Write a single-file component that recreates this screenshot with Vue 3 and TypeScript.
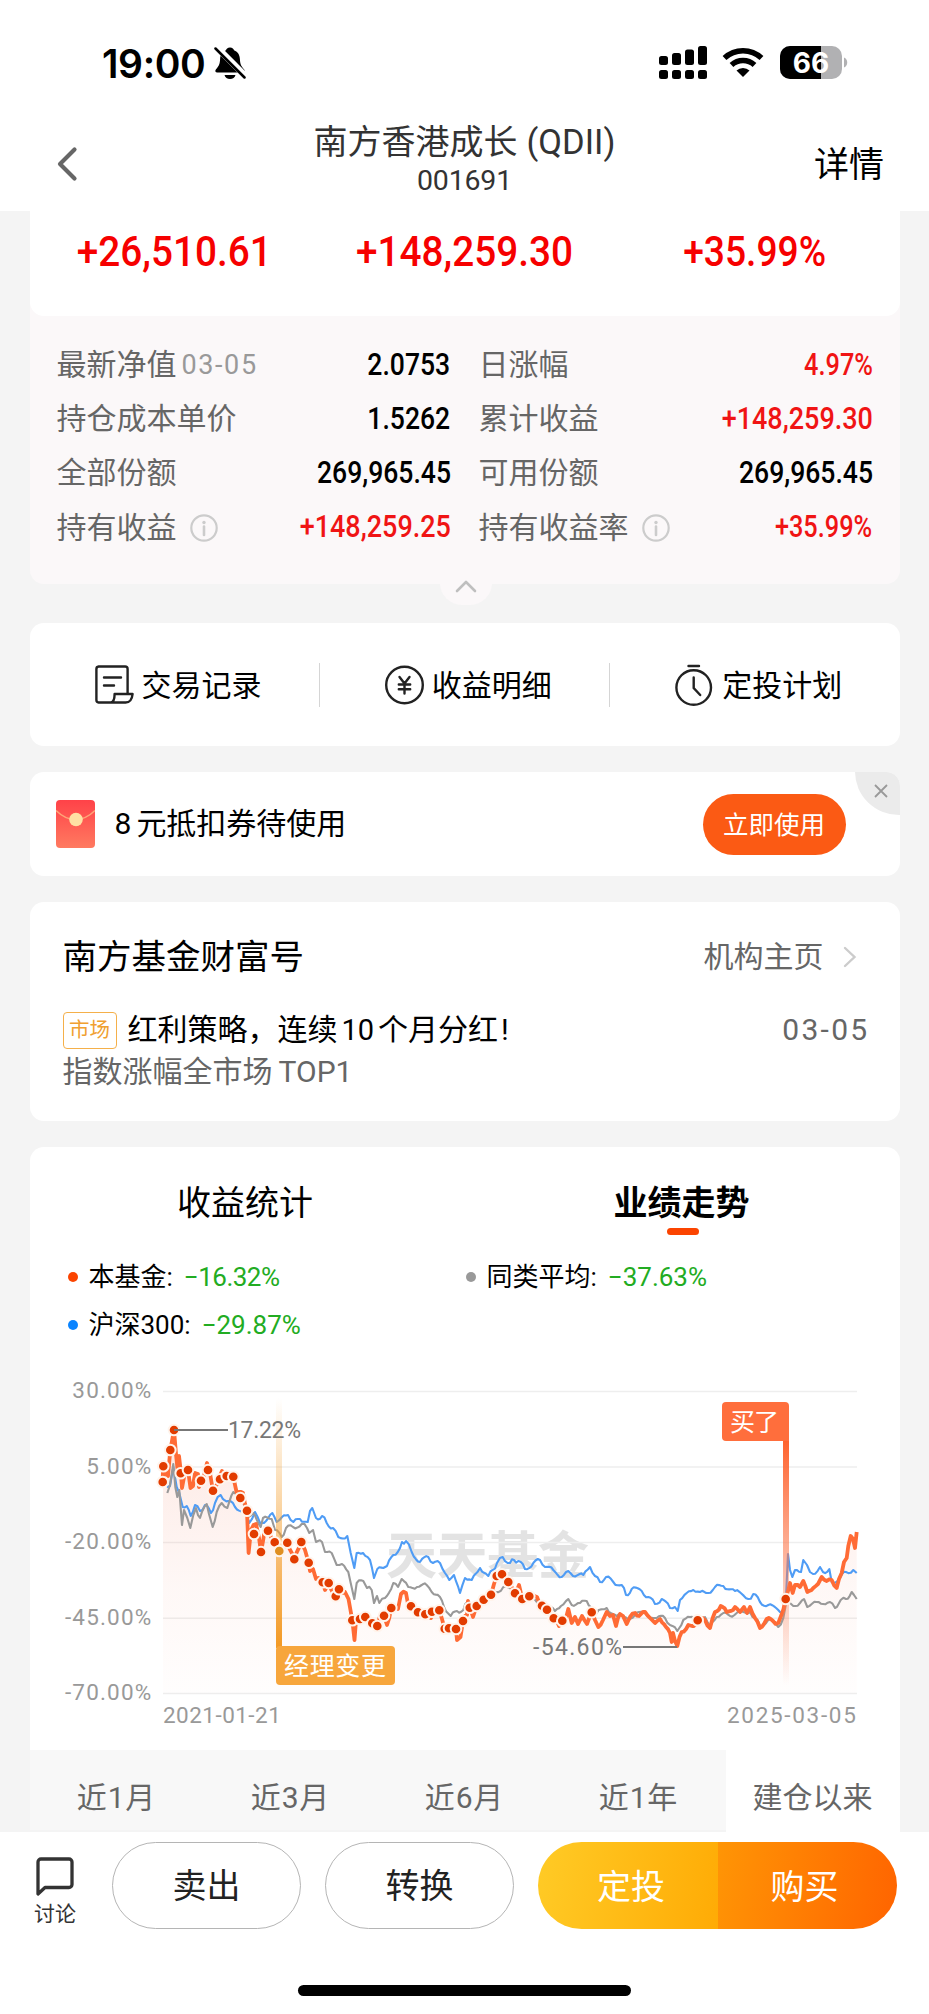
<script setup lang="ts">
type Point = [number, number]

interface Holding {
  label: string
  note?: string
  info?: boolean
  value: string
  red?: boolean
}

const totals: string[] = ['+26,510.61', '+148,259.30', '+35.99%']

const holdings: Holding[] = [
  { label: '最新净值', note: '03-05', value: '2.0753' },
  { label: '日涨幅', value: '4.97%', red: true },
  { label: '持仓成本单价', value: '1.5262' },
  { label: '累计收益', value: '+148,259.30', red: true },
  { label: '全部份额', value: '269,965.45' },
  { label: '可用份额', value: '269,965.45' },
  { label: '持有收益', info: true, value: '+148,259.25', red: true },
  { label: '持有收益率', info: true, value: '+35.99%', red: true },
]

const legend = [
  { name: '本基金:', value: '−16.32%', tone: 'fund' },
  { name: '同类平均:', value: '−37.63%', tone: 'peer' },
  { name: '沪深300:', value: '−29.87%', tone: 'index' },
]

const periods: string[] = ['近1月', '近3月', '近6月', '近1年', '建仓以来']

const grid = [
  { y: 21.5, label: '30.00%' },
  { y: 97, label: '5.00%' },
  { y: 172.5, label: '-20.00%' },
  { y: 248.3, label: '-45.00%' },
  { y: 323.5, label: '-70.00%' },
]

const fund: Point[] = [
  [133, 96], [132.7, 112], [135, 100], [138, 106], [140.3, 80], [144, 60], [146, 84], [148, 104], [149, 86], [151, 103], [152, 118],
  [155, 102], [158, 100], [160.5, 118], [163, 116], [165, 103], [168, 104], [169, 117], [171, 111], [174, 106], [177, 93], [180, 103],
  [183, 121], [188, 112], [192, 101], [196.7, 106], [203.3, 107], [207, 124], [213, 123], [217, 141], [218.6, 183], [221, 160],
  [226, 154], [229, 168], [231, 182], [235, 158], [238, 161], [244.7, 172], [249.3, 181], [257.3, 173], [264.3, 189], [271.3, 172],
  [275, 180], [278.7, 193], [280, 201], [283, 199], [286, 209], [292.7, 212], [295, 220], [298.7, 213], [305.7, 226], [309, 219],
  [315, 222], [318.5, 229], [321, 243], [322.3, 250], [324.5, 270], [326, 250], [330, 249], [335.3, 247], [342.3, 253], [347.3, 256],
  [350, 246], [354, 246], [357, 255], [361.3, 238], [368, 239], [371, 224], [376, 223], [378, 234], [381, 236], [388, 242],
  [395.3, 244], [401, 248], [402, 242], [409.3, 240], [412, 249], [414.7, 259], [419, 258], [426, 259], [427, 270], [430.5, 267],
  [433, 251], [437, 245], [438, 231], [440, 238], [443, 247], [446.7, 236], [453.7, 230], [461, 225], [464, 214], [466.7, 206],
  [472, 204], [478.3, 212], [485, 223], [489, 215], [492.3, 229], [499.3, 226], [507, 227], [512, 236], [517, 240], [523.7, 248],
  [529, 256], [532.3, 251], [536, 248], [538.3, 239], [541.7, 253], [545, 247], [548, 254], [552, 246], [557, 254], [561.7, 242],
  [565, 250], [568.3, 257], [573, 250], [576.7, 242], [580, 246], [583, 245], [586, 256], [590, 244], [593, 246], [596.7, 254],
  [600, 247], [605, 243], [609, 246], [615, 242], [620, 248], [625, 253], [630, 249], [636, 257], [640, 263], [641.7, 272],
  [643, 263], [647.3, 276], [651.7, 262], [658.3, 255], [662, 256], [667.7, 250], [675, 250], [680, 258], [685, 242], [690.7, 236],
  [696.7, 242], [705, 237], [710, 242], [714, 237], [717, 243], [720, 237], [725, 248], [730, 258], [736.7, 249], [743, 251],
  [748.3, 253], [751, 246], [755.7, 229], [758.3, 220], [760, 213], [762.7, 223], [765, 215], [770, 217], [773.3, 211], [777.3, 222],
  [783.3, 218], [788, 214], [791.7, 207], [796.7, 211], [801.7, 210], [806.7, 218], [809, 209], [811.7, 203], [814, 192],
  [816.7, 188], [818.3, 176], [820.7, 166], [823, 169], [825, 178], [826.7, 162],
]

const index: Point[] = [
  [136.7, 117], [140, 116], [143.3, 97], [146.7, 117], [149.3, 123], [152.7, 137], [156.7, 136], [160.7, 146], [165, 135], [170, 141],
  [175, 135], [181, 143], [185, 133], [190.7, 125], [198.3, 131], [205, 137], [213, 140], [219.3, 153], [225, 142], [230, 153],
  [236, 151], [242.3, 143], [246.7, 152], [252, 147], [258, 145], [263.3, 152], [270, 149], [277.7, 152], [280, 141], [282.3, 138],
  [286, 148], [292, 146], [296.7, 153], [303, 158], [308.3, 167], [317.3, 166], [320.7, 183], [324.3, 198], [326.7, 183], [333, 183],
  [340, 190], [344, 208], [347.3, 199], [353.3, 198], [357, 196], [363.3, 185], [370, 178], [372, 172], [376, 171], [381.7, 182],
  [390, 192], [398.3, 187], [403, 193], [410, 193], [415, 203], [419.3, 210], [424, 205], [430, 223], [435, 208], [441.7, 210],
  [450, 198], [458.3, 206], [463, 200], [467, 193], [472.7, 187], [480, 193], [484, 190], [488.3, 191], [495, 199], [503.3, 193],
  [510, 190], [515, 197], [523.3, 200], [531.7, 207], [538.3, 201], [543, 206], [553.3, 205], [560, 197], [565, 206], [570, 212],
  [576, 207], [583.3, 212], [591.7, 215], [596, 225], [601.7, 219], [611.7, 221], [618.3, 227], [625, 234], [631.7, 229], [640, 238],
  [645, 237], [647.7, 241], [650, 230], [656.7, 223], [663.3, 220], [670, 222], [678.3, 223], [685, 217], [693.3, 216], [705, 221],
  [718.3, 229], [723.3, 224], [730, 232], [738.3, 235], [750, 242], [754, 240], [756, 227], [758, 184], [760, 200], [762.3, 207],
  [765, 200], [771, 202], [773.3, 190], [777, 195], [780, 202], [783, 204], [790, 197], [793, 202], [799.3, 199], [801.7, 212],
  [810, 208], [816, 202], [823.3, 200], [826.7, 203],
]

const peer: Point[] = [
  [137.3, 123], [140, 115], [143.3, 94], [145.3, 117], [147.3, 127], [149.3, 120], [152, 155], [154, 140], [157.3, 148], [160.3, 158],
  [163.3, 145], [166, 138], [170, 148], [176.7, 134], [179, 144], [182.7, 157], [186.7, 142], [191.7, 133], [197.3, 138], [203.3, 122],
  [208.3, 125], [213.3, 133], [218.3, 147], [223, 143], [230.7, 157], [233, 148], [241.7, 149], [245, 160], [251.7, 167], [256, 158],
  [263, 157], [271.7, 154], [277, 158], [279.3, 163], [283, 160], [286, 172], [292, 172], [295, 182], [301.7, 183], [306.7, 195],
  [312, 194], [318.3, 202], [320.7, 213], [324.3, 229], [326.7, 213], [333.3, 211], [337, 218], [341.7, 220], [344, 233], [347, 226],
  [349.3, 233], [355, 228], [363.3, 213], [368, 217], [371.7, 209], [378.3, 217], [387, 217], [396.7, 215], [401.7, 222], [410, 227],
  [414, 237], [420.7, 246], [427, 241], [433.3, 240], [437.3, 232], [447, 235], [453, 231], [460, 227], [466, 222], [473.3, 217],
  [483.3, 222], [493.3, 231], [503.3, 228], [510, 234], [525, 241], [531, 236], [538.3, 229], [541.7, 235], [550, 233], [556.7, 231],
  [566.7, 243], [576.7, 238], [586.7, 246], [596.7, 248], [605, 245], [615, 243], [626.7, 248], [635, 248], [640, 255], [647.3, 261],
  [653.3, 250], [660, 247], [675, 247], [680, 256], [686.7, 247], [693.3, 243], [700, 246], [706.7, 243], [720, 242], [725, 248],
  [730, 256], [738.3, 250], [748.3, 257], [753.3, 248], [756.7, 230], [760, 233], [763.3, 236], [770, 233], [774, 229], [777.3, 237],
  [786.7, 232], [793, 234], [800, 232], [805, 238], [810.7, 230], [816, 229], [821.7, 222], [824, 225], [826.7, 229],
]

const trades: Point[] = [
  [133.3, 96.3], [132.7, 112], [140.3, 80], [144, 60], [150.7, 103.3], [158, 100], [171, 110.7], [178, 100], [183, 120.7],
  [190, 109.3], [196.7, 106], [203.3, 106.7], [210.3, 128], [217, 140.7], [224, 164], [231, 182], [238, 160.7], [244.7, 172.3],
  [257.3, 172.7], [264.3, 189.3], [271.3, 172], [278.7, 192.7], [292.7, 212.3], [298.7, 213], [305.7, 226.3], [309, 219.3],
  [322.3, 250.3], [330, 249], [335.3, 247], [342.3, 253.3], [347.3, 256], [354, 245.7], [361.3, 238], [381, 236.3], [388, 242.3],
  [395.3, 244.3], [402, 241.7], [409.3, 240.3], [414.7, 258.7], [419, 258.3], [426, 259], [433, 251], [439.7, 237.7], [446.7, 236],
  [453.7, 229.7], [461, 224.7], [466.7, 206], [472, 204.3], [478.3, 212], [485, 223.3], [492.3, 229], [499.3, 226.3],
  [512, 235.7], [517, 239.7], [523.7, 248.3], [532.3, 250.7], [561.7, 242.3], [667.7, 250.3], [755.7, 229],
]

function daily(points: Point[], swing: number): Point[] {
  const out: Point[] = []
  points.forEach((p, i) => {
    out.push(p)
    const next = points[i + 1]
    if (!next) return
    const steps = Math.floor((next[0] - p[0]) / 1.9)
    for (let s = 1; s < steps; s++) {
      const t = s / steps
      const wave = Math.sin((i * 7 + s) * 12.9898) * swing
      out.push([p[0] + (next[0] - p[0]) * t, p[1] + (next[1] - p[1]) * t + wave])
    }
  })
  return out
}

const toPath = (points: Point[]): string =>
  points.map(([x, y], i) => `${i ? 'L' : 'M'}${x.toFixed(1)} ${y.toFixed(1)}`).join('')

const fundPath = toPath(daily(fund, 2))
const indexPath = toPath(daily(index, 2.2))
const peerPath = toPath(daily(peer, 2.2))
const areaPath = `${fundPath}L826.7 323.5L133 323.5Z`
</script>

<template>
  <div class="page" lang="zh-CN">
    <header class="top">
      <div class="status">
        <span class="clock">19:00</span>
        <svg class="bell" width="32" height="34" viewBox="0 0 32 34">
          <path d="M16 1.500c-2.500 0-3.700 1.500-4 2.700C7.800 6 6.300 9 6.100 13c-.2 5-1.300 7.300-4.100 10.200-1.300 1.500-.7 3.400 1.300 3.400h25.400c2 0 2.600-1.900 1.300-3.400-2.800-2.900-3.900-5.200-4.100-10.200-.2-4-1.700-7-5.900-8.800-.3-1.200-1.500-2.700-4-2.700z" fill="#000" />
          <path d="M10.500 29h11c-.7 2.500-2.700 4-5.500 4s-4.800-1.500-5.500-4z" fill="#000" />
          <path d="M2.500 1 32.500 31" stroke="#fff" stroke-width="6.500" />
          <path d="M1.500 2.500 30.500 31.500" stroke="#000" stroke-width="2.500" stroke-linecap="round" />
        </svg>
        <svg class="system" width="194" height="36" viewBox="0 0 194 36">
          <g fill="#000">
            <rect x="0" y="11" width="9" height="9" rx="2.500" />
            <rect x="13" y="8" width="9" height="12" rx="2.500" />
            <rect x="26" y="4.500" width="9" height="15.500" rx="2.500" />
            <rect x="39" y="1" width="9" height="19" rx="2.500" />
            <rect v-for="x in [0, 13, 26, 39]" :key="x" :x="x" y="25" width="9" height="9" rx="2.500" />
          </g>
          <g fill="none" stroke="#000" stroke-width="5.500">
            <path d="M65.500 13a27 27 0 0 1 37 0" />
            <path d="M72.500 20a17 17 0 0 1 23 0" />
          </g>
          <path d="M84 32l-6.500-6.500a9.500 9.500 0 0 1 13 0z" fill="#000" />
          <rect x="121" y="1" width="62" height="33" rx="10" fill="#b1b1b3" />
          <path d="M131 1h31v33h-31a10 10 0 0 1-10-10V11a10 10 0 0 1 10-10z" fill="#000" />
          <path d="M185 12.500a5.500 5.500 0 0 1 0 10z" fill="#b1b1b3" />
          <text x="152" y="28" text-anchor="middle" class="charge">66</text>
        </svg>
      </div>
      <div class="nav">
        <svg class="back" width="22" height="36" viewBox="0 0 22 36">
          <path d="M18.500 3.500 4 18l14.500 14.500" fill="none" stroke="#666" stroke-width="4.200" stroke-linecap="round" stroke-linejoin="round" />
        </svg>
        <div class="heading">
          <div class="fund-name">南方香港成长<span class="suffix">(QDII)</span></div>
          <div class="fund-code">001691</div>
        </div>
        <span class="detail">详情</span>
      </div>
    </header>

    <section class="summary">
      <div class="totals">
        <div v-for="t in totals" :key="t" class="total">
          <span class="din" :class="{ percent: t.endsWith('%') }">{{ t }}</span>
        </div>
      </div>
      <div class="holdings">
        <div v-for="h in holdings" :key="h.label" class="holding">
          <span class="label">{{ h.label }}</span>
          <span v-if="h.note" class="note">{{ h.note }}</span>
          <svg v-if="h.info" class="info" width="28" height="28" viewBox="0 0 28 28">
            <circle cx="14" cy="14" r="12.700" fill="none" stroke="#ccc" stroke-width="2.200" />
            <circle cx="14" cy="8.500" r="1.700" fill="#ccc" />
            <path d="M14 12.500v8.500" stroke="#ccc" stroke-width="2.600" stroke-linecap="round" />
          </svg>
          <span class="value" :class="{ red: h.red, percent: h.value.endsWith('%') }">{{ h.value }}</span>
        </div>
      </div>
      <div class="collapse">
        <svg width="22" height="14" viewBox="0 0 22 14">
          <path d="M2 12 11 3l9 9" fill="none" stroke="#bfbfbf" stroke-width="2.600" stroke-linecap="round" stroke-linejoin="round" />
        </svg>
      </div>
    </section>

    <section class="card quick">
      <div class="quick-item">
        <svg width="40" height="40" viewBox="0 0 40 40" fill="none" stroke="#222" stroke-width="2.400" stroke-linecap="round" stroke-linejoin="round">
          <path d="M32 28.500V4a2.500 2.500 0 0 0-2.500-2.500H3A2.500 2.500 0 0 0 .8 4v31A2.500 2.500 0 0 0 3 37.500h27c4 0 6.500-3.500 7-8.500H19c0 5-1.500 8.500-4 8.500" transform="translate(.6 0)" />
          <path d="M9 12.500h17M9 20.500h10" />
        </svg>
        <span class="quick-text">交易记录</span>
      </div>
      <i class="divider"></i>
      <div class="quick-item">
        <svg width="40" height="40" viewBox="0 0 40 40" fill="none" stroke="#222" stroke-width="2.400" stroke-linecap="round">
          <circle cx="19.500" cy="20" r="18.300" />
          <path d="M14.500 12l5 6.500 5-6.500M19.500 18.500V28.500M13.800 19.500h11.400M13.800 24.200h11.400" />
        </svg>
        <span class="quick-text">收益明细</span>
      </div>
      <i class="divider"></i>
      <div class="quick-item">
        <svg width="40" height="44" viewBox="0 0 40 44" fill="none" stroke="#222" stroke-width="2.400" stroke-linecap="round">
          <circle cx="18.700" cy="24.500" r="17.300" />
          <path d="M13.500 3h10.500M18.700 14.500V25l6.500 7" />
        </svg>
        <span class="quick-text">定投计划</span>
      </div>
    </section>

    <section class="card coupon">
      <svg class="envelope" width="39" height="48" viewBox="0 0 39 48">
        <defs>
          <linearGradient id="packet" x1="0" y1="0" x2="0" y2="1">
            <stop offset="0" stop-color="#ff4248" />
            <stop offset="1" stop-color="#ff7a60" />
          </linearGradient>
        </defs>
        <rect width="39" height="48" rx="4" fill="url(#packet)" />
        <path d="M0 10.500Q9 19.500 19.500 19.500T39 10.500" fill="none" stroke="#ffa477" stroke-width="1.600" />
        <circle cx="20" cy="19.500" r="6.800" fill="#ffe0a3" />
      </svg>
      <span class="coupon-text"><b class="count">8</b>元抵扣券待使用</span>
      <span class="use">立即使用</span>
      <span class="close">
        <svg width="14" height="14" viewBox="0 0 14 14">
          <path d="M1 1 13 13M13 1 1 13" stroke="#999" stroke-width="1.800" />
        </svg>
      </span>
    </section>

    <section class="card news">
      <div class="news-head">
        <span class="news-title">南方基金财富号</span>
        <span class="news-link">机构主页</span>
        <svg width="14" height="22" viewBox="0 0 14 22">
          <path d="M2 2l9.500 9L2 20" fill="none" stroke="#ccc" stroke-width="2.400" stroke-linecap="round" />
        </svg>
      </div>
      <div class="news-row">
        <span class="tag">市场</span>
        <span class="headline">红利策略，连续<i class="num">10</i>个月分红<i class="bang">!</i></span>
        <span class="news-date">03-05</span>
      </div>
      <div class="news-sub">指数涨幅全市场<i class="top1">TOP1</i></div>
    </section>

    <section class="card trend">
      <div class="tabs">
        <span class="tab">收益统计</span>
        <span class="tab active">业绩走势</span>
      </div>
      <div class="legend">
        <div v-for="l in legend" :key="l.name" class="legend-item">
          <i class="dot" :class="l.tone"></i>
          <span>{{ l.name }}</span>
          <span class="drop">{{ l.value }}</span>
        </div>
      </div>
      <svg class="chart" width="870" height="380" viewBox="0 0 870 380">
        <defs>
          <linearGradient id="area" x1="0" y1="60" x2="0" y2="323" gradientUnits="userSpaceOnUse">
            <stop offset="0" stop-color="#f0603c" stop-opacity="0.14" />
            <stop offset="0.6" stop-color="#f0603c" stop-opacity="0.045" />
            <stop offset="1" stop-color="#f0603c" stop-opacity="0.01" />
          </linearGradient>
          <linearGradient id="manager" x1="0" y1="28" x2="0" y2="276" gradientUnits="userSpaceOnUse">
            <stop offset="0" stop-color="#f5a233" stop-opacity="0" />
            <stop offset="1" stop-color="#f39a25" />
          </linearGradient>
          <linearGradient id="bought" x1="0" y1="70" x2="0" y2="315" gradientUnits="userSpaceOnUse">
            <stop offset="0" stop-color="#ff622c" />
            <stop offset="0.55" stop-color="#fb7a50" stop-opacity="0.48" />
            <stop offset="1" stop-color="#fb7a50" stop-opacity="0" />
          </linearGradient>
        </defs>
        <text x="356" y="204" class="watermark" textLength="203">天天基金</text>
        <g v-for="g in grid" :key="g.label">
          <path :d="`M133 ${g.y}H827`" stroke="#eee" stroke-width="1.600" />
          <text x="122.500" :y="g.y + 6.500" text-anchor="end" class="axis">{{ g.label }}</text>
        </g>
        <path :d="areaPath" fill="url(#area)" />
        <g fill="none" stroke-linejoin="round">
          <path :d="indexPath" stroke="#4f9cf5" stroke-width="2.100" />
          <path :d="peerPath" stroke="#999" stroke-width="2.100" />
          <path :d="fundPath" stroke="#ff6b35" stroke-width="3.800" />
        </g>
        <rect x="246" y="28" width="6" height="250" fill="url(#manager)" />
        <rect x="753" y="70" width="6" height="246" fill="url(#bought)" />
        <circle v-for="([x, y], i) in trades" :key="i" :cx="x" :cy="y" r="5.300" fill="#e23c00" stroke="#fff4ec" stroke-width="2" />
        <circle cx="249.300" cy="181" r="5.300" fill="#df8f22" stroke="#fff4ec" stroke-width="2" />
        <path d="M144 60H198M593 277H647" stroke="#777" stroke-width="2" />
        <text x="198" y="68" class="mark" textLength="73">17.22%</text>
        <text x="503" y="285" class="mark" textLength="89">-54.60%</text>
        <rect x="246" y="276" width="119" height="39" rx="4" fill="#f7a63c" />
        <text x="254" y="304.500" class="flag" textLength="102">经理变更</text>
        <path d="M696 32h59a4 4 0 0 1 4 4v35h-63a4 4 0 0 1-4-4V36a4 4 0 0 1 4-4z" fill="#ff6e3c" />
        <text x="700" y="60.500" class="flag" textLength="49">买了</text>
        <text x="133" y="353" class="axis" textLength="119">2021-01-21</text>
        <text x="827" y="353" class="axis" text-anchor="end" textLength="130">2025-03-05</text>
      </svg>
      <div class="periods">
        <span v-for="(p, i) in periods" :key="p" class="period" :class="{ on: i === 4 }">{{ p }}</span>
      </div>
    </section>

    <footer class="bottom">
      <div class="actions">
        <div class="discuss">
          <svg width="38" height="40" viewBox="0 0 38 40">
            <path d="M2 37V5a3 3 0 0 1 3-3h28a3 3 0 0 1 3 3v22.500a3 3 0 0 1-3 3H9z" fill="none" stroke="#333" stroke-width="3.300" stroke-linejoin="round" />
          </svg>
          <span>讨论</span>
        </div>
        <span class="pill">卖出</span>
        <span class="pill">转换</span>
        <div class="buy">
          <span class="plan">定投</span>
          <span class="purchase">购买</span>
        </div>
      </div>
      <i class="home"></i>
    </footer>
  </div>
</template>

<style>
body {
  margin: 0;
  background: #f4f4f4;
}
</style>

<style scoped>
.page {
  width: 929px;
  height: 2014px;
  overflow: hidden;
  display: flex;
  flex-direction: column;
  background: #f4f4f4;
  color: #000;
  font-family: Roboto, "Noto Sans CJK SC", sans-serif;
  font-size: 30px;
  line-height: 1;
  white-space: nowrap;
}
i, b {
  font-style: normal;
  font-weight: inherit;
}
svg {
  display: block;
  flex: none;
}
.page > * {
  flex: none;
  box-sizing: border-box;
}
.top {
  height: 211px;
  background: #fff;
}
.status {
  height: 126px;
  box-sizing: border-box;
  padding: 0 76px 0 102px;
  display: flex;
  align-items: center;
}
.clock {
  font-family: Inter, sans-serif;
  font-weight: 600;
  font-size: 39px;
  letter-spacing: -0.4px;
  width: 111px;
}
.bell {
  margin-left: 1px;
}
.system {
  margin-left: auto;
}
.charge {
  font: 700 28px Inter, sans-serif;
  fill: #fff;
}
.nav {
  display: grid;
  grid-template-columns: 90px 1fr 90px;
  align-items: center;
  padding: 0 45px 0 56px;
  height: 76px;
}
.heading {
  text-align: center;
  color: #333;
  padding-right: 11px;
  margin-top: -7px;
}
.fund-name {
  font-size: 34px;
  line-height: 40px;
}
.suffix {
  margin-left: 9px;
  font-size: 34.5px;
}
.fund-code {
  font-size: 28.5px;
  line-height: 38px;
  letter-spacing: -0.2px;
}
.detail {
  font-size: 35px;
  text-align: right;
  padding-top: 3px;
}
.summary {
  width: 870px;
  height: 373px;
  margin: 0 auto;
  position: relative;
  background: #fbf8f9;
  border-radius: 0 0 14px 14px;
}
.totals {
  height: 105px;
  box-sizing: border-box;
  padding-top: 17px;
  display: grid;
  grid-template-columns: 290px 290px 290px;
  background: #fff;
  border-radius: 0 0 14px 14px;
}
.total {
  text-align: center;
  color: #f60000;
  font-size: 43px;
  font-weight: 500;
  line-height: 46px;
}
.din {
  display: inline-block;
  transform: scaleX(0.9);
}
.din.percent {
  transform: scaleX(0.865);
}
.holdings {
  padding: 22px 27px 0;
  display: grid;
  grid-template-columns: 394px 394px;
  column-gap: 28px;
  grid-auto-rows: 54.2px;
}
.holding {
  display: flex;
  align-items: center;
  color: #666;
}
.note {
  margin-left: 5px;
  color: #999;
  font-size: 27px;
  letter-spacing: 1.6px;
}
.info {
  margin-left: 13px;
}
.value {
  margin-left: auto;
  color: #000;
  font-weight: 500;
  font-size: 30.5px;
  transform: scaleX(0.87);
  transform-origin: right;
}
.value.red {
  color: #f01414;
  transform: scaleX(0.885);
}
.value.percent {
  transform: scaleX(0.83);
}
.collapse {
  position: absolute;
  left: 410px;
  top: 372px;
  width: 52px;
  height: 22px;
  border-radius: 0 0 26px 26px;
  background: #fbf8f9;
  display: flex;
  justify-content: center;
}
.collapse svg {
  margin-top: -4px;
}
.card {
  width: 870px;
  margin: 0 auto;
  background: #fff;
  border-radius: 14px;
}
.quick {
  margin-top: 39px;
  height: 123px;
  display: flex;
  align-items: center;
}
.quick-item {
  flex: 1;
  padding-left: 65px;
  display: flex;
  align-items: center;
  gap: 7px;
}
.quick-text {
  padding-top: 2px;
}
.divider {
  width: 1px;
  height: 44px;
  background: #d5d5d5;
}
.coupon {
  margin-top: 26px;
  height: 104px;
  position: relative;
  overflow: hidden;
  padding: 0 54px 0 26px;
  display: flex;
  align-items: center;
}
.coupon {
  box-sizing: border-box;
}
.coupon-text {
  margin-left: 20px;
}
.count {
  margin-right: 5px;
}
.use {
  margin-left: auto;
  width: 143px;
  height: 61px;
  line-height: 63px;
  border-radius: 31px;
  background: #fb5a14;
  color: #fff;
  text-align: center;
  font-size: 25.5px;
}
.close {
  position: absolute;
  right: -43px;
  top: -44px;
  width: 88px;
  height: 87px;
  border-radius: 50%;
  background: #ebebeb;
}
.close svg {
  margin: 56px 0 0 19px;
}
.news {
  box-sizing: border-box;
  margin-top: 26px;
  height: 219px;
  padding: 0 32px 0 33px;
}
.news-head {
  padding: 34px 11px 0 0;
  display: flex;
  align-items: center;
  height: 42px;
}
.news-title {
  font-size: 34.5px;
}
.news-link {
  margin-left: auto;
  margin-right: 19px;
  color: #666;
}
.news-row {
  margin-top: 33px;
  display: flex;
  align-items: center;
  height: 38px;
}
.tag {
  box-sizing: border-box;
  width: 54px;
  height: 37px;
  border: 1.5px solid #f5b04a;
  border-radius: 4px;
  color: #f0a030;
  font-size: 20.5px;
  line-height: 35px;
  text-align: center;
}
.headline {
  margin-left: 11px;
}
.num {
  margin: 0 4px;
  font-size: 29px;
}
.bang {
  margin-left: 3px;
}
.news-date {
  margin-left: auto;
  color: #666;
  letter-spacing: 2.3px;
  margin-right: -2px;
}
.news-sub {
  margin-top: 7px;
  line-height: 32px;
  color: #666;
}
.top1 {
  margin-left: 6px;
}
.trend {
  margin-top: 26px;
  border-radius: 14px 14px 0 0;
}
.tabs {
  display: grid;
  grid-template-columns: 434px 436px;
  height: 106px;
}
.tab {
  text-align: center;
  font-size: 34px;
  line-height: 112px;
  position: relative;
}
.tab.active {
  font-weight: 700;
}
.tab:first-child {
  text-indent: -3px;
}
.tab.active::after {
  content: "";
  position: absolute;
  left: 203px;
  top: 81px;
  width: 32px;
  height: 7px;
  border-radius: 4px;
  background: #fb4400;
}
.legend {
  height: 117px;
  padding-left: 38px;
  display: grid;
  grid-template-columns: 398px 1fr;
  grid-template-rows: 48px 48px;
  font-size: 26px;
}
.legend-item {
  display: flex;
  align-items: center;
}
.dot {
  width: 10px;
  height: 10px;
  margin-right: 11px;
  border-radius: 50%;
}
.fund { background: #fb4400; }
.peer { background: #999; }
.index { background: #0a84ff; }
.drop {
  margin-left: 11px;
  color: #22ac22;
}
.fund ~ .drop {
  letter-spacing: -0.5px;
}
.axis {
  font-size: 22.5px;
  fill: #999;
  letter-spacing: 1.2px;
}
.mark {
  font-size: 23px;
  fill: #777;
}
.flag {
  font-size: 25px;
  fill: #fff;
}
.watermark {
  font-size: 51px;
  font-weight: 700;
  fill: #e3e3e3;
}
.periods {
  display: grid;
  grid-template-columns: repeat(5, 174px);
  height: 80px;
  background: #f8f8f8;
}
.period {
  text-align: center;
  line-height: 95px;
  color: #666;
  letter-spacing: 0.8px;
}
.period.on {
  background: #fff;
  letter-spacing: 0;
}
.bottom {
  margin-top: 2px;
  height: 182px;
  background: #fff;
  display: flex;
  flex-direction: column;
  align-items: center;
}
.actions {
  align-self: stretch;
  display: flex;
  align-items: flex-start;
  padding: 10px 32px 0 34px;
  height: 143px;
}
.discuss {
  width: 42px;
  margin: 15px 36px 0 0;
  display: flex;
  flex-direction: column;
  align-items: center;
  gap: 7px;
  font-size: 21px;
  color: #333;
}
.pill {
  box-sizing: border-box;
  width: 189px;
  height: 87px;
  margin-right: 24px;
  border: 1.5px solid #b5b5b5;
  border-radius: 44px;
  line-height: 87px;
  text-align: center;
  font-size: 34px;
  color: #222;
}
.buy {
  flex: 1;
  height: 87px;
  display: flex;
  border-radius: 44px;
  overflow: hidden;
  color: #fff;
  font-size: 34px;
  line-height: 90px;
  text-align: center;
}
.plan {
  width: 180px;
  text-indent: 6px;
  background: linear-gradient(100deg, #ffcb26, #ffab05);
}
.purchase {
  flex: 1;
  text-indent: -6px;
  background: linear-gradient(100deg, #ff9505, #ff6400);
}
.home {
  width: 333px;
  height: 11px;
  border-radius: 6px;
  background: #000;
}
</style>
